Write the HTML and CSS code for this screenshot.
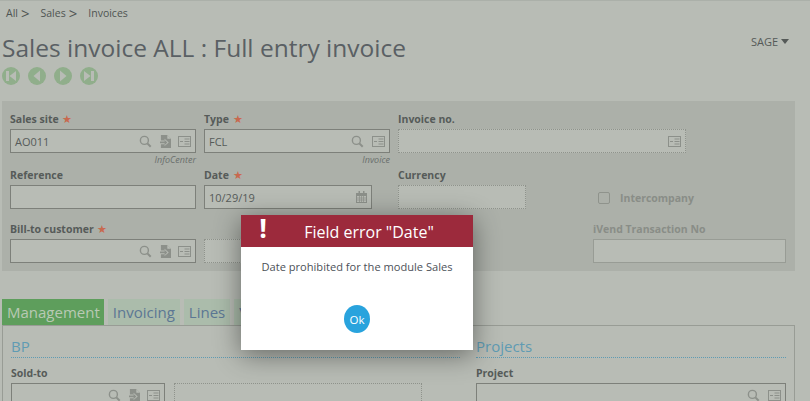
FILE: index.html
```html
<!DOCTYPE html>
<html>
<head>
<meta charset="UTF-8">
<title>Sales invoice ALL : Full entry invoice</title>
<link rel="stylesheet" href="styles.css">
</head>
<body>
<svg class="icon-defs" width="0" height="0">
	<symbol id="i-search" viewBox="0 0 14 14"><circle cx="5.800" cy="5.800" r="4.300" fill="none" stroke="currentColor" stroke-width="1.500"/><path d="M9 9l3.600 3.600" stroke="currentColor" stroke-width="2.200"/></symbol>
	<symbol id="i-link" viewBox="0 0 12 14"><path d="M1 0h7l4 4v10H1V10h4v2l4.500-4L5 4v2H1z" fill="currentColor"/><path d="M8 0v4h4z" fill="#b8bcb5"/><path d="M0 7h5V5l3 3-3 3V9H0z" fill="currentColor"/></symbol>
	<symbol id="i-card" viewBox="0 0 13 11"><rect x=".5" y=".5" width="12" height="10" fill="none" stroke="currentColor"/><path d="M2 5.500h3M6.500 3h5M6.500 5.500h5M6.500 8h5" stroke="currentColor"/></symbol>
	<symbol id="i-cal" viewBox="0 0 11 12"><path d="M0 2h11v10H0z" fill="currentColor"/><path d="M1 5h9v6H1z" fill="#b8bcb5"/><path d="M2.500 0h1.500v3H2.500zM7 0h1.500v3H7z" fill="currentColor"/><path d="M1 7h9M1 9h9M3.500 5v6M5.500 5v6M7.500 5v6" stroke="currentColor" stroke-width=".7"/></symbol>
</svg>

<div class="page">
	<div class="crumbs">
		<span>All</span><b>&gt;</b>
		<span>Sales</span><b>&gt;</b>
		<span>Invoices</span>
	</div>
	<div class="title-row">
		<h1>Sales invoice ALL : Full entry invoice</h1>
		<div class="user">SAGE<i></i></div>
	</div>
	<div class="nav-btns">
		<svg viewBox="0 0 18 18"><circle cx="9" cy="9" r="9"/><path d="M4 4h3v10H4zM14 4v10L7.500 9z"/></svg>
		<svg viewBox="0 0 18 18"><circle cx="9" cy="9" r="9"/><path d="M12 3.500v11L5.500 9z"/></svg>
		<svg viewBox="0 0 18 18"><circle cx="9" cy="9" r="9"/><path d="M6 3.500v11L12.500 9z"/></svg>
		<svg viewBox="0 0 18 18"><circle cx="9" cy="9" r="9"/><path d="M11 4h3v10h-3zM4 4v10l6.500-5z"/></svg>
	</div>

	<div class="panel">
		<div class="row row-first">
			<div class="field w186">
				<label>Sales site <em>★</em></label>
				<div class="box">
					<span class="val">AO011</span>
					<svg class="ic s"><use href="#i-search"/></svg><svg class="ic l"><use href="#i-link"/></svg><svg class="ic c"><use href="#i-card"/></svg>
				</div>
				<div class="hint">InfoCenter</div>
			</div>
			<div class="field w186">
				<label>Type <em>★</em></label>
				<div class="box">
					<span class="val">FCL</span>
					<svg class="ic s"><use href="#i-search"/></svg><svg class="ic c"><use href="#i-card"/></svg>
				</div>
				<div class="hint">Invoice</div>
			</div>
			<div class="field w288">
				<label>Invoice no.</label>
				<div class="box dotted">
					<span class="val"></span>
					<svg class="ic c"><use href="#i-card"/></svg>
				</div>
			</div>
		</div>
		<div class="row row-second">
			<div class="field w186">
				<label>Reference</label>
				<div class="box"></div>
			</div>
			<div class="field w168">
				<label>Date <em>★</em></label>
				<div class="box">
					<span class="val">10/29/19</span>
					<svg class="ic d"><use href="#i-cal"/></svg>
				</div>
			</div>
			<div class="field w128">
				<label>Currency</label>
				<div class="box dotted"></div>
			</div>
			<div class="check">
				<span class="check-box"></span>
				<span>Intercompany</span>
			</div>
		</div>
		<div class="row">
			<div class="field w186">
				<label>Bill-to customer <em>★</em></label>
				<div class="box">
					<span class="val"></span>
					<svg class="ic s"><use href="#i-search"/></svg><svg class="ic l"><use href="#i-link"/></svg><svg class="ic c"><use href="#i-card"/></svg>
				</div>
			</div>
			<div class="field w186">
				<label>&nbsp;</label>
				<div class="box dotted"></div>
			</div>
			<div class="field w193 faded">
				<label>iVend Transaction No</label>
				<div class="box"></div>
			</div>
		</div>
	</div>

	<div class="tabs">
		<div class="tab active">Management</div>
		<div class="tab">Invoicing</div>
		<div class="tab">Lines</div>
		<div class="tab">Valuation</div>
	</div>
	<div class="tab-body">
		<div class="block block-bp">
			<h2>BP</h2>
			<label>Sold-to</label>
			<div class="sold-row">
				<div class="box w154">
					<span class="val"></span>
					<svg class="ic s"><use href="#i-search"/></svg><svg class="ic l"><use href="#i-link"/></svg><svg class="ic c"><use href="#i-card"/></svg>
				</div>
				<div class="box dotted w248"></div>
			</div>
		</div>
		<div class="block block-projects">
			<h2>Projects</h2>
			<label>Project</label>
			<div class="box">
				<span class="val"></span>
				<svg class="ic s"><use href="#i-search"/></svg><svg class="ic c"><use href="#i-card"/></svg>
			</div>
		</div>
	</div>
</div>

<div class="dialog">
	<div class="dialog-head">
		<span class="bang">!</span>
		<span class="dialog-title">Field error "Date"</span>
	</div>
	<div class="dialog-body">
		<p>Date prohibited for the module Sales</p>
		<button class="ok">Ok</button>
	</div>
</div>
</body>
</html>
```

FILE: styles.css
```css
body{
	margin: 0;
	background: #b8bcb5;
	font-family: "Open Sans", "Liberation Sans", sans-serif;
	color: #555a58;
	overflow: hidden;
}
.icon-defs{
	position: absolute;
}
.page{
	width: 810px;
	height: 401px;
	box-sizing: border-box;
	border-top: 1px solid #abb0a9;
	overflow: hidden;
}
.crumbs{
	display: flex;
	align-items: center;
	height: 24px;
	padding-left: 6px;
	font-size: 10.500px;
	color: #4f5452;
}
.crumbs b{
	font-weight: 400;
	font-size: 15px;
	line-height: 14px;
	margin: 0 11px 0 3px;
}
.title-row{
	display: flex;
	justify-content: space-between;
	height: 42px;
}
h1{
	margin: 0;
	padding-left: 2px;
	font-size: 24.500px;
	font-weight: 400;
	line-height: 46px;
	color: #5a6064;
	white-space: nowrap;
}
.user{
	display: flex;
	align-items: center;
	height: 32px;
	margin-right: 21px;
	font-size: 11px;
	color: #555a58;
}
.user i{
	margin-left: 3px;
	border-top: 5px solid #555a58;
	border-left: 4px solid transparent;
	border-right: 4px solid transparent;
}
.nav-btns{
	display: flex;
	gap: 8px;
	padding-left: 2px;
	height: 34px;
}
.nav-btns svg{
	width: 18px;
	height: 18px;
}
.nav-btns circle{
	fill: #90ae8b;
}
.nav-btns path{
	fill: #b8bcb5;
}
.panel{
	width: 793px;
	height: 170px;
	box-sizing: border-box;
	margin-left: 2px;
	padding: 10px 8px 0;
	background: #acb0a9;
}
.row{
	display: flex;
	gap: 8px;
}
.row-first{
	height: 57px;
}
.row-second{
	height: 53px;
}
.row-second label{
	margin-top: -1px;
	margin-bottom: 3px;
}
.field label, .block label{
	display: block;
	height: 16px;
	margin-bottom: 2px;
	font-size: 10.500px;
	font-weight: 700;
	line-height: 16px;
	color: #565b59;
}
.field em{
	color: #c8694f;
	font-style: normal;
	font-size: 11px;
	line-height: 10px;
	font-weight: 400;
	margin-left: 1px;
}
.box{
	display: flex;
	align-items: center;
	height: 24px;
	box-sizing: border-box;
	border: 1px solid #7d807a;
	background: #b8bcb5;
	padding: 0 4px;
	font-size: 11px;
}
.box.dotted{
	border: 1px dotted #8f938c;
}
.val{
	flex: 1;
	color: #565b59;
}
.ic{
	color: #8c908a;
	flex: none;
}
.ic.s{
	width: 13px;
	height: 13px;
	margin-right: 8px;
}
.ic.l{
	width: 11px;
	height: 13px;
	margin-right: 7px;
}
.ic.c{
	width: 13px;
	height: 11px;
}
.ic.d{
	width: 11px;
	height: 12px;
}
.hint{
	text-align: right;
	font-size: 9px;
	font-style: italic;
	line-height: 14px;
	color: #6a6f6c;
}
.w186{
	width: 186px;
}
.w168{
	width: 168px;
	margin-right: 18px;
}
.w288{
	width: 288px;
}
.w128{
	width: 128px;
}
.w193{
	width: 193px;
	margin-left: 195px;
}
.w154{
	width: 154px;
}
.w248{
	width: 248px;
}
.faded label{
	color: #898d87;
}
.faded .box{
	border-color: #989c95;
}
.check{
	display: flex;
	align-items: center;
	height: 24px;
	margin: 18px 0 0 64px;
	font-size: 10.500px;
	font-weight: 700;
	color: #898d87;
}
.check-box{
	width: 12px;
	height: 12px;
	box-sizing: border-box;
	margin-right: 10px;
	border: 1px solid #8f938c;
	border-radius: 2px;
}
.tabs{
	display: flex;
	gap: 4px;
	margin: 28px 0 0 2px;
	height: 26px;
}
.tab{
	padding: 0 5px;
	font-size: 15px;
	line-height: 27px;
	background: #abbcab;
	color: #5c7794;
}
.tab.active{
	padding-right: 4px;
	background: #5e9e5c;
	color: #b9c9b4;
}
.tab-body{
	display: flex;
	width: 793px;
	height: 80px;
	box-sizing: border-box;
	margin-left: 2px;
	border: 1px solid #989c95;
	border-bottom: none;
}
.block{
	box-sizing: border-box;
	padding-left: 8px;
}
.block-bp{
	width: 465px;
	padding-right: 8px;
}
.block-projects{
	width: 326px;
	padding-right: 8px;
}
h2{
	margin: 0 0 7px;
	height: 32px;
	box-sizing: border-box;
	border-bottom: 1px dotted #5f9bb3;
	font-size: 15px;
	font-weight: 400;
	line-height: 40px;
	color: #5f9bb3;
}
.sold-row{
	display: flex;
	gap: 9px;
}
.dialog{
	position: absolute;
	left: 241px;
	top: 215px;
	width: 232px;
	height: 135px;
	background: #fff;
	box-shadow: 0 5px 25px rgba(0, 0, 0, .45);
}
.dialog-head{
	display: flex;
	height: 32px;
	background: #9c2a3c;
	color: #fff;
}
.bang{
	width: 44px;
	font-size: 27px;
	font-weight: 700;
	line-height: 26px;
	text-align: center;
}
.dialog-title{
	flex: 1;
	padding-right: 20px;
	text-align: center;
	font-size: 16px;
	line-height: 34px;
	white-space: nowrap;
}
.dialog-body{
	display: flex;
	flex-direction: column;
	align-items: center;
}
.dialog-body p{
	margin: 0 0 19px;
	height: 39px;
	font-size: 11.100px;
	line-height: 40px;
	color: #4c5158;
}
.ok{
	width: 26px;
	height: 28px;
	padding: 0;
	border: none;
	border-radius: 50%;
	background: #29a3dd;
	color: #fff;
	font-family: inherit;
	font-size: 11.500px;
}
```
